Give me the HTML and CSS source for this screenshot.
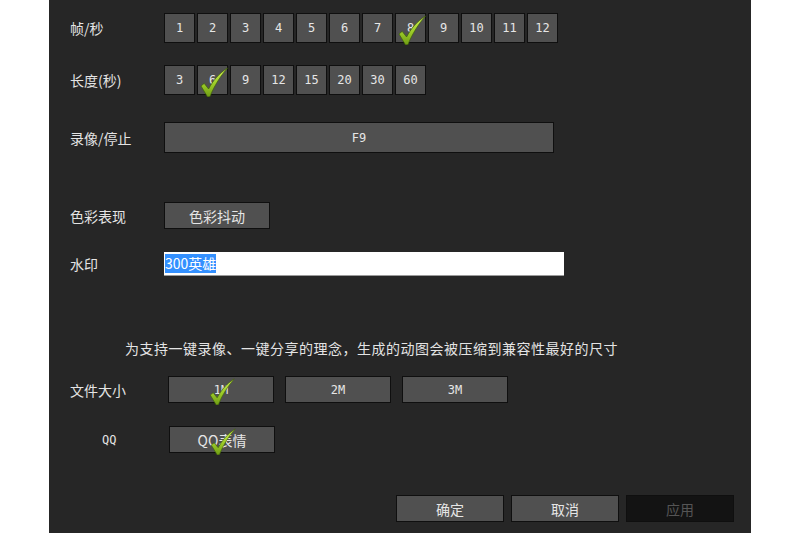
FILE: index.html
```html
<!DOCTYPE html>
<html lang="zh-CN">
<head>
    <meta charset="UTF-8">
    <title>录制设置</title>
    <link rel="stylesheet" href="styles.css">
</head>
<body>
    <svg width="0" height="0" class="defs">
        <defs>
            <linearGradient id="checkFill" x1="0" y1="0" x2="0" y2="1">
                <stop offset="0" stop-color="#d2ee55"/>
                <stop offset="0.55" stop-color="#9ccb28"/>
                <stop offset="1" stop-color="#6f9c14"/>
            </linearGradient>
            <symbol id="check" viewBox="0 0 28 30">
                <path d="M1 19 L4.2 16.4 L8.6 22 C13 13.5 19 6.5 27.5 1 C21 8.5 14.5 18 10 29.6 L7.6 30 Z" fill="url(#checkFill)" stroke="#3f6108" stroke-width="0.7" stroke-linejoin="round"/>
            </symbol>
        </defs>
    </svg>

    <div class="panel">
        <div class="row row-fps">
            <div class="label">帧/秒</div>
            <div class="btn-group">
                <div class="btn sq">1</div>
                <div class="btn sq">2</div>
                <div class="btn sq">3</div>
                <div class="btn sq">4</div>
                <div class="btn sq">5</div>
                <div class="btn sq">6</div>
                <div class="btn sq">7</div>
                <div class="btn sq on">8<svg class="check"><use href="#check"/></svg></div>
                <div class="btn sq">9</div>
                <div class="btn sq">10</div>
                <div class="btn sq">11</div>
                <div class="btn sq">12</div>
            </div>
        </div>

        <div class="row row-len">
            <div class="label">长度(秒)</div>
            <div class="btn-group">
                <div class="btn sq">3</div>
                <div class="btn sq on">6<svg class="check"><use href="#check"/></svg></div>
                <div class="btn sq">9</div>
                <div class="btn sq">12</div>
                <div class="btn sq">15</div>
                <div class="btn sq">20</div>
                <div class="btn sq">30</div>
                <div class="btn sq">60</div>
            </div>
        </div>

        <div class="row row-key">
            <div class="label">录像/停止</div>
            <div class="btn key">F9</div>
        </div>

        <div class="row row-color">
            <div class="label">色彩表现</div>
            <div class="btn wide cn">色彩抖动</div>
        </div>

        <div class="row row-mark">
            <div class="label">水印</div>
            <div class="input"><span class="selected">300英雄</span></div>
        </div>

        <div class="note">为支持一键录像、一键分享的理念，生成的动图会被压缩到兼容性最好的尺寸</div>

        <div class="row row-size">
            <div class="label">文件大小</div>
            <div class="btn-group size-group">
                <div class="btn wide on">1M<svg class="check small"><use href="#check"/></svg></div>
                <div class="btn wide">2M</div>
                <div class="btn wide">3M</div>
            </div>
        </div>

        <div class="row row-qq">
            <div class="label qq">QQ</div>
            <div class="btn wide cn on qq-btn">QQ表情<svg class="check small"><use href="#check"/></svg></div>
        </div>

        <div class="footer">
            <div class="btn foot">确定</div>
            <div class="btn foot">取消</div>
            <div class="btn foot disabled">应用</div>
        </div>
    </div>
</body>
</html>
```

FILE: styles.css
```css
body {
    margin: 0;
    background: #fff;
    font-family: "Noto Sans CJK SC", "DejaVu Sans", sans-serif;
    font-size: 14px;
    color: #e4e4e4;
}
.defs { position: absolute; }
.panel {
    margin-left: 49px;
    width: 702px;
    height: 533px;
    box-sizing: border-box;
    padding: 13px 0 0 21px;
    background: #262626;
}
.row {
    display: flex;
    align-items: center;
}
.label {
    width: 94px;
    flex: none;
    line-height: 20px;
}
.btn-group { display: flex; gap: 2px; }
.btn {
    position: relative;
    box-sizing: border-box;
    display: flex;
    align-items: center;
    justify-content: center;
    background: #505050;
    border: 1px solid #0f0f0f;
    color: #e6e6e6;
    font-family: "DejaVu Sans Mono", "Liberation Mono", monospace;
    font-size: 12px;
}
.btn.sq { width: 31px; height: 30px; }
.btn.cn { font-family: "Noto Sans CJK SC", sans-serif; font-size: 14px; }
.btn.wide { width: 106px; height: 27px; }
.btn.key { width: 390px; height: 31px; }
.check {
    position: absolute;
    left: 50%;
    top: 1px;
    width: 28px;
    height: 30px;
    margin-left: -13px;
    overflow: visible;
}
.check.small { height: 27px; }

.row-len { margin-top: 22px; }
.row-key { margin-top: 27px; }
.row-color { margin-top: 49px; }
.row-mark { margin-top: 23px; }
.input {
    box-sizing: border-box;
    width: 400px;
    height: 24px;
    padding: 1px 0 0 1px;
    background: #fff;
    border-bottom: 1px solid #9a9a9a;
}
.selected {
    display: inline-block;
    background: #3390ff;
    color: #fff;
    line-height: 19px;
    font-size: 14px;
}
.note {
    margin-top: 62px;
    padding-left: 55px;
    line-height: 20px;
    font-size: 14px;
    letter-spacing: 0.5px;
}
.row-size { margin-top: 18px; }
.size-group { gap: 11px; margin-left: 4px; }
.row-qq { margin-top: 23px; }
.label.qq {
    padding-left: 32px;
    box-sizing: border-box;
    font-family: "DejaVu Sans Mono", monospace;
    font-size: 12px;
}
.qq-btn { margin-left: 5px; }
.footer {
    display: flex;
    justify-content: flex-end;
    gap: 7px;
    margin-top: 42px;
    padding-right: 17px;
}
.btn.foot {
    width: 108px;
    height: 27px;
    font-family: "Noto Sans CJK SC", sans-serif;
    font-size: 14px;
}
.btn.disabled {
    background: #131313;
    color: #555;
}
```
